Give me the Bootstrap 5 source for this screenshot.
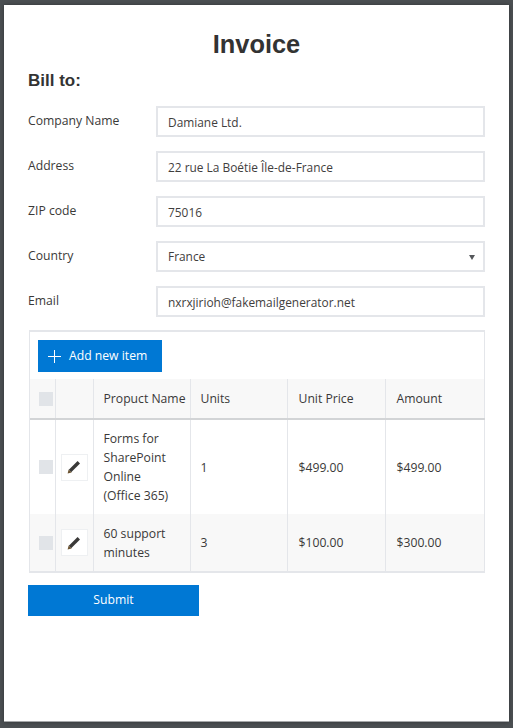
<!DOCTYPE html>
<html lang="en">
<head>
<meta charset="utf-8">
<title>Invoice</title>
<link href="https://cdn.jsdelivr.net/npm/bootstrap@5.3.0/dist/css/bootstrap.min.css" rel="stylesheet">
<style>
html,body{height:728px;overflow:hidden}
body{background:#4b4f52;padding:5px 4px 6px 4px;font-family:"Open Sans","Noto Sans",sans-serif;font-size:12.2px;color:#3a3938}
.sheet{background:#fff;height:717px;padding:0 24px;border-bottom:1px solid #a5a7a9;box-shadow:0 0 4px rgba(0,0,0,.35)}
.doc-title{font-family:"Liberation Sans",Arial,sans-serif;font-weight:700;font-size:25.4px;line-height:29px;text-align:center;color:#333;margin:0;padding-top:25px}
.bill-head{font-family:"Liberation Sans",Arial,sans-serif;font-weight:700;font-size:17px;line-height:20px;color:#333;margin:12px 0 0}
.field-row{display:flex;align-items:center;height:31px;margin-bottom:14px}
.field-row label{width:128px;flex:none;margin:0}
.field-stack{margin-top:15px}
.field-box{flex:1;height:31px;min-width:0;border:2px solid #e4e6ea;border-radius:0;padding:0 10px;font-size:11.9px;color:#3f3e3d;background-color:#fff;box-shadow:none}
select.field-box{padding:0 10px;background-image:none;appearance:none}
.select-wrap{flex:1;position:relative;display:flex;min-width:0}
.caret-mark{position:absolute;right:10px;top:14px;width:0;height:0;border-left:3.5px solid transparent;border-right:3.5px solid transparent;border-top:5px solid #55575b;pointer-events:none}
.grid-frame{border:2px solid #e4e6ea;border-bottom:0;border-right-width:1px;margin-left:1px;width:456px;margin-top:-1px;border-left-width:1px}
.grid-bar{padding:8px;height:47px;background:#fff}
.add-btn{display:inline-flex;align-items:center;background:#0078d4;color:#fff;border:0;border-radius:0;height:32px;width:124px;padding:0 0 0 10px;font-size:12.2px;gap:8px}
.add-btn:hover{background:#0078d4;color:#fff}
.items{table-layout:fixed;width:454px;margin:0;border-collapse:collapse;font-size:12.2px;color:#3a3938}
.items th,.items td{padding:0 10px;border:0;border-right:1px solid #e4e6ea;border-bottom:0;vertical-align:middle;line-height:19px;font-weight:400;background:transparent;box-shadow:none;color:#3a3938}
.items th:first-child,.items td:first-child{padding:0 0 0 9px}
.items th:nth-child(2),.items td:nth-child(2){padding:0 0 0 5px}
.items th:nth-child(n+5),.items td:nth-child(n+5){padding-left:11px}
.items th{background:#f8f8f8;height:40px;border-bottom:2px solid #d2d4d6;white-space:nowrap}
.items th:nth-child(3){padding-right:0}
.items .row-one td{height:95px;background:#fff}
.items .row-two td{height:58px;background:#f8f8f8;border-bottom:2px solid #e4e6ea}
.check-box{display:block;width:14px;height:14px;background:#e1e4e8}
.edit-btn{display:flex;align-items:center;justify-content:center;width:27px;height:27px;padding:0;background:#fff;border:1px solid #eef0f2;border-radius:0}
.send-btn{display:block;width:171px;height:31px;margin-top:12px;background:#0078d4;color:#fff;border:0;border-radius:0;font-size:12.2px;padding:0}
.send-btn:hover{background:#0078d4;color:#fff}
</style>
</head>
<body>
<div class="sheet">
  <h1 class="doc-title">Invoice</h1>
  <h2 class="bill-head">Bill to:</h2>
  <form>
    <div class="field-stack">
      <div class="field-row"><label for="f1">Company Name</label><input id="f1" class="form-control field-box" value="Damiane Ltd."></div>
      <div class="field-row"><label for="f2">Address</label><input id="f2" class="form-control field-box" value="22 rue La Boétie Île-de-France"></div>
      <div class="field-row"><label for="f3">ZIP code</label><input id="f3" class="form-control field-box" value="75016"></div>
      <div class="field-row"><label for="f4">Country</label><div class="select-wrap"><select id="f4" class="form-select field-box"><option>France</option></select><span class="caret-mark"></span></div></div>
      <div class="field-row"><label for="f5">Email</label><input id="f5" class="form-control field-box" value="nxrxjirioh@fakemailgenerator.net"></div>
    </div>
    <div class="grid-frame">
      <div class="grid-bar">
        <button type="button" class="btn add-btn"><svg width="13" height="13" viewBox="0 0 13 13"><path d="M6.5 0v13M0 6.5h13" stroke="#fff" stroke-width="1" fill="none"/></svg><span>Add new item</span></button>
      </div>
      <table class="table items">
        <colgroup><col style="width:25px"><col style="width:38px"><col style="width:97px"><col style="width:97px"><col style="width:98px"><col style="width:99px"></colgroup>
        <thead><tr><th><span class="check-box"></span></th><th></th><th>Propuct Name</th><th>Units</th><th>Unit Price</th><th>Amount</th></tr></thead>
        <tbody>
          <tr class="row-one"><td><span class="check-box"></span></td><td><button type="button" class="btn edit-btn" aria-label="Edit"><svg width="14" height="14" viewBox="0 0 14 14"><path d="M3 11L11.8 2.2" stroke="#3a3938" stroke-width="3.4" fill="none"/><path d="M.6 13.4l1-4 3 3z" fill="#6b5330"/></svg></button></td><td>Forms for SharePoint Online (Office 365)</td><td>1</td><td>$499.00</td><td>$499.00</td></tr>
          <tr class="row-two"><td><span class="check-box"></span></td><td><button type="button" class="btn edit-btn" aria-label="Edit"><svg width="14" height="14" viewBox="0 0 14 14"><path d="M3 11L11.8 2.2" stroke="#3a3938" stroke-width="3.4" fill="none"/><path d="M.6 13.4l1-4 3 3z" fill="#6b5330"/></svg></button></td><td>60 support minutes</td><td>3</td><td>$100.00</td><td>$300.00</td></tr>
        </tbody>
      </table>
    </div>
    <button type="button" class="btn send-btn">Submit</button>
  </form>
</div>
<script src="https://cdn.jsdelivr.net/npm/bootstrap@5.3.0/dist/js/bootstrap.bundle.min.js"></script>
</body>
</html>
